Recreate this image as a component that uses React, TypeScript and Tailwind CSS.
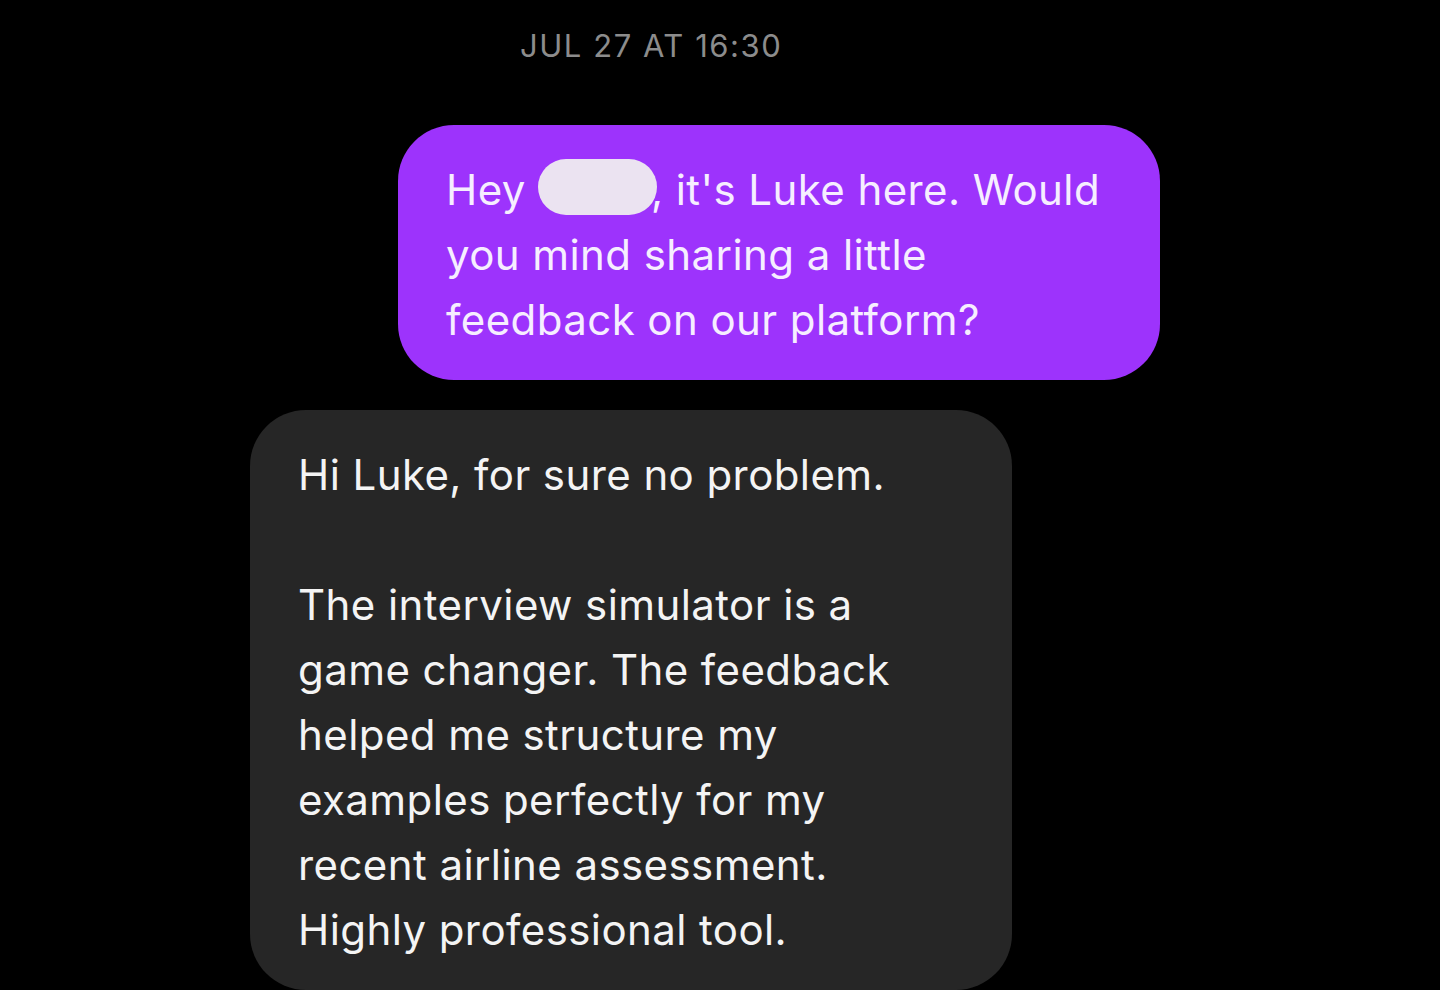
export default function App() {
  return (
    <div className="h-[990px] w-[1440px] overflow-hidden bg-black font-['Inter','Noto_Sans',sans-serif] antialiased">
      <div className="flex flex-col pl-[250px]">
        <p className="mt-[28px] pl-[270px] text-[31px] leading-[36px] tracking-[0.05em] text-[#8c8c8c]">
          JUL 27 AT 16:30
        </p>

        <div className="mt-[61px] ml-[148px] w-[762px] rounded-[56px] bg-[#9d33fc] pl-[48px] pt-[32px] pb-[28px] text-[42px] leading-[65px] tracking-[0.01em] text-[#f6eeff]">
          <p className="whitespace-nowrap">
            Hey{" "}
            <span className="relative -top-[7px] inline-block h-[56px] w-[119px] -mr-[6px] rounded-full bg-[#ebe3f1] align-middle" />
            , it's Luke here. Would
          </p>
          <p className="whitespace-nowrap">you mind sharing a little</p>
          <p className="whitespace-nowrap">feedback on our platform?</p>
        </div>

        <div className="mt-[30px] w-[762px] rounded-[56px] bg-[#262626] pl-[48px] pt-[32px] pb-[28px] text-[42px] leading-[65px] tracking-[0.01em] text-[#f4f4f4]">
          <p className="whitespace-nowrap">Hi Luke, for sure no problem.</p>
          <p className="h-[65px]" />
          <p className="whitespace-nowrap">The interview simulator is a</p>
          <p className="whitespace-nowrap">game changer. The feedback</p>
          <p className="whitespace-nowrap">helped me structure my</p>
          <p className="whitespace-nowrap">examples perfectly for my</p>
          <p className="whitespace-nowrap">recent airline assessment.</p>
          <p className="whitespace-nowrap">Highly professional tool.</p>
        </div>
      </div>
    </div>
  );
}
